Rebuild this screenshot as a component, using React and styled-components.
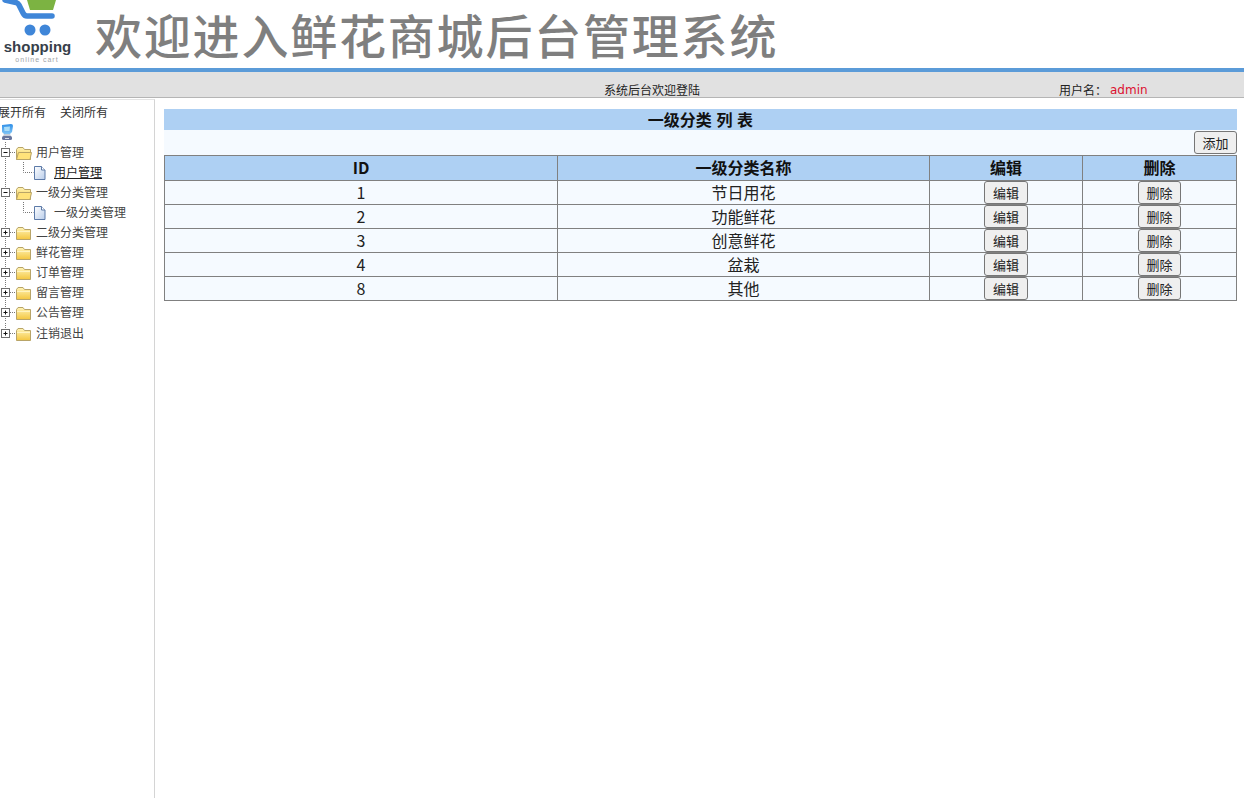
import React from "react";
import styled, { createGlobalStyle } from "styled-components";

const CJK = `"Noto Sans CJK SC", "Noto Sans", sans-serif`;

const Global = createGlobalStyle`
  html, body { margin: 0; padding: 0; height: 100%; background: #fff; overflow: hidden; }
  body { font-family: ${CJK}; font-size: 12px; color: #333; }
  * { box-sizing: border-box; }
`;

const Page = styled.div`
  display: flex;
  flex-direction: column;
  height: 798px;
`;

const Header = styled.header`
  display: flex;
  height: 68px;
  overflow: hidden;
`;

const Logo = styled.div`
  flex: none;
  width: 95px;
  height: 68px;
`;

const CartIcon = styled.svg`
  display: block;
  width: 60px;
  height: 38px;
`;

const LogoName = styled.div`
  margin: 1px 0 0 3px;
  width: 69px;
  text-align: center;
  font: bold 15px/16px "Liberation Sans", sans-serif;
  color: #37404a;
`;

const LogoTag = styled.div`
  width: 74px;
  text-align: center;
  font: 7px/9px "Liberation Sans", sans-serif;
  letter-spacing: 1px;
  color: #a0a4a8;
`;

const Title = styled.h1`
  margin: 0;
  font: 500 47px/68px ${CJK};
  letter-spacing: 1.8px;
  color: #7f7f7f;
  white-space: nowrap;
`;

const StatusBar = styled.div`
  display: flex;
  align-items: flex-end;
  height: 30px;
  padding-left: 604px;
  border-top: 4px solid #5b9bd8;
  border-bottom: 1px solid #b5b5b5;
  background: #e1e1e1;
  font-size: 12px;
  line-height: 14px;
  color: #222;
`;

const Welcome = styled.span`
  width: 455px;
`;

const UserLabel = styled.span`
  width: 51px;
`;

const UserName = styled.span`
  font-family: "DejaVu Sans", sans-serif;
  color: #dc1030;
`;

const Body = styled.div`
  display: flex;
  flex: 1;
  min-height: 0;
  margin-top: 1px;
`;

const Sidebar = styled.aside`
  flex: none;
  width: 155px;
  border-right: 1px solid #d4d4d4;
  border-top: 1px solid #e4e4e4;
  overflow: hidden;
`;

const TreeLinks = styled.div`
  display: flex;
  gap: 14px;
  margin: 3px 0 0 -2px;
  height: 18px;
  line-height: 18px;
  color: #333;
`;

const TreeRoot = styled.div`
  display: flex;
  align-items: center;
  height: 20px;
  margin-top: 1px;
`;

const TreeRow = styled.div`
  display: flex;
  align-items: center;
  height: 20px;
  margin-top: ${(p) => (p.$last ? "1px" : "0")};
  white-space: nowrap;
`;

const Glyph = styled.svg`
  display: block;
  flex: none;
`;

const TreeLabel = styled.span`
  margin-left: ${(p) => p.$gap}px;
  color: ${(p) => (p.$active ? "#222" : "#444")};
  line-height: 16px;
  text-decoration: ${(p) => (p.$active ? "underline" : "none")};
`;

const Main = styled.main`
  flex: 1;
  min-width: 0;
  padding: 10px 7px 0 9px;
`;

const PanelTitle = styled.div`
  height: 21px;
  background: #aed0f3;
  text-align: center;
  font: 700 16px/21px ${CJK};
  word-spacing: 1px;
  color: #111;
`;

const Toolbar = styled.div`
  display: flex;
  justify-content: flex-end;
  align-items: center;
  height: 25px;
  background: #f5faff;
`;

const Button = styled.button`
  display: block;
  height: 23px;
  padding: 0 7.5px;
  margin: ${(p) => (p.$center ? "0 auto" : "0")};
  border: 1px solid #767676;
  border-radius: 3px;
  background: #efefef;
  color: #222;
  font: 13px/20px ${CJK};
`;

const Table = styled.table`
  width: 1072px;
  table-layout: fixed;
  border-collapse: collapse;
  font-size: 16px;
  color: #111;
`;

const Head = styled.th`
  height: 25px;
  padding: 0 0 2px;
  border: 1px solid #808080;
  background: #aed0f3;
  font: 700 16px/22px ${CJK};
  color: #111;
`;

const Cell = styled.td`
  height: 24px;
  padding: 0 0 2px;
  border: 1px solid #808080;
  background: #f5faff;
  text-align: center;
  font: 400 16px/20px ${CJK};
  color: #222;
`;

const ActionCell = styled(Cell)`
  padding: 0;
`;

const Box = ({ open }) => (
  <>
    <rect x="1.5" y="5.5" width="8" height="8" fill="#fff" stroke="#6f6f6f" />
    <path d="M3.5 9.5h4" stroke="#111" />
    {!open && <path d="M5.5 7.5v4" stroke="#111" />}
  </>
);

const Folder = ({ open }) => (
  <g>
    <path d="M16.5 6.5 l1.5 -2 h5 l1.500 2 h6 v10 h-14z" fill="url(#fg)" stroke="#b8a468" />
    {open ? (
      <path d="M16.500 16.500 l2 -7 h13 l-1.500 7z" fill="#ffe27a" stroke="#b8a468" />
    ) : (
      <path d="M17 8.500h13" stroke="#fff4c0" />
    )}
  </g>
);

const Gradients = () => (
  <svg width="0" height="0" style={{ position: "absolute" }}>
    <defs>
      <linearGradient id="fg" x1="0" y1="0" x2="0" y2="1">
        <stop offset="0" stopColor="#fff4b8" />
        <stop offset="1" stopColor="#f4c63f" />
      </linearGradient>
      <linearGradient id="pg" x1="0" y1="0" x2="1" y2="1">
        <stop offset="0" stopColor="#ffffff" />
        <stop offset="1" stopColor="#b9cdea" />
      </linearGradient>
      <linearGradient id="rg" x1="0" y1="0" x2="0" y2="1">
        <stop offset="0" stopColor="#2f8fe8" />
        <stop offset="1" stopColor="#7fc4f5" />
      </linearGradient>
    </defs>
  </svg>
);

const DOTS = { stroke: "#777", strokeDasharray: "1 1", fill: "none" };

const FolderGlyph = ({ open, last }) => (
  <Glyph width="32" height="20" viewBox="0 -1 32 20">
    <path d={last ? "M5.500 -1v6" : "M5.500 -1v20"} {...DOTS} />
    <path d="M10 9.500h6" {...DOTS} />
    <Box open={open} />
    <Folder open={open} />
  </Glyph>
);

const PageGlyph = () => (
  <Glyph width="47" height="20" viewBox="0 -1 47 20">
    <path d="M5.500 -1v20" {...DOTS} />
    <path d="M23.500 -1v10.500h10" {...DOTS} />
    <path d="M34.500 3.500h7l3.500 3.500v9.500h-10.500z" fill="url(#pg)" stroke="#5c7aa8" />
    <path d="M41.500 3.500v3.500h3.500" fill="#fff" stroke="#5c7aa8" />
  </Glyph>
);

const RootGlyph = () => (
  <Glyph width="14" height="18" viewBox="0 0 14 18">
    <path d="M2 2 L11 1 Q13 1 13 3 L12 9 L10 11 H4 L2 9z" fill="url(#rg)" />
    <path d="M4 4 L10 3.500 L9.500 8 H4.500z" fill="#a8dcf8" />
    <path d="M4 11h6l1 2H3z" fill="#c4ccd8" />
    <rect x="2" y="13" width="10" height="4" rx="1.500" fill="#66749c" />
    <path d="M5 15.500h4" stroke="#d8dde8" />
  </Glyph>
);

const TREE = [
  { label: "用户管理", open: true, child: "用户管理", active: true },
  { label: "一级分类管理", open: true, child: "一级分类管理" },
  { label: "二级分类管理" },
  { label: "鲜花管理" },
  { label: "订单管理" },
  { label: "留言管理" },
  { label: "公告管理" },
  { label: "注销退出", last: true },
];

const ROWS = [
  [1, "节日用花"],
  [2, "功能鲜花"],
  [3, "创意鲜花"],
  [4, "盆栽"],
  [8, "其他"],
];

export default function App() {
  return (
    <Page>
      <Global />
      <Gradients />
      <Header>
        <Logo>
          <CartIcon viewBox="0 0 60 38">
            <path d="M27 0h29l-3 10H30z" fill="#7cb342" />
            <path d="M5 0 L16 2.500 Q18 3 19 5 L23 13 Q24.500 16 27 16 H52" fill="none" stroke="#3f86d8" strokeWidth="5.500" strokeLinecap="round" strokeLinejoin="round" />
            <circle cx="30" cy="30" r="5.500" fill="#3f86d8" />
            <circle cx="45" cy="30" r="5.500" fill="#3f86d8" />
          </CartIcon>
          <LogoName>shopping</LogoName>
          <LogoTag>online cart</LogoTag>
        </Logo>
        <Title>欢迎进入鲜花商城后台管理系统</Title>
      </Header>
      <StatusBar>
        <Welcome>系统后台欢迎登陆</Welcome>
        <UserLabel>用户名：</UserLabel>
        <UserName>admin</UserName>
      </StatusBar>
      <Body>
        <Sidebar>
          <TreeLinks>
            <span>展开所有</span>
            <span>关闭所有</span>
          </TreeLinks>
          <TreeRoot>
            <RootGlyph />
          </TreeRoot>
          {TREE.map((n) => (
            <React.Fragment key={n.label}>
              <TreeRow $last={n.last}>
                <FolderGlyph open={n.open} last={n.last} />
                <TreeLabel $gap={4}>{n.label}</TreeLabel>
              </TreeRow>
              {n.child && (
                <TreeRow>
                  <PageGlyph />
                  <TreeLabel $gap={7} $active={n.active}>{n.child}</TreeLabel>
                </TreeRow>
              )}
            </React.Fragment>
          ))}
        </Sidebar>
        <Main>
          <PanelTitle>一级分类 列 表</PanelTitle>
          <Toolbar>
            <Button>添加</Button>
          </Toolbar>
          <Table>
            <colgroup>
              <col width="393" />
              <col width="372" />
              <col width="153" />
              <col width="154" />
            </colgroup>
            <thead>
              <tr>
                <Head>ID</Head>
                <Head>一级分类名称</Head>
                <Head>编辑</Head>
                <Head>删除</Head>
              </tr>
            </thead>
            <tbody>
              {ROWS.map(([id, name]) => (
                <tr key={id}>
                  <Cell>{id}</Cell>
                  <Cell>{name}</Cell>
                  <ActionCell><Button $center>编辑</Button></ActionCell>
                  <ActionCell><Button $center>删除</Button></ActionCell>
                </tr>
              ))}
            </tbody>
          </Table>
        </Main>
      </Body>
    </Page>
  );
}
